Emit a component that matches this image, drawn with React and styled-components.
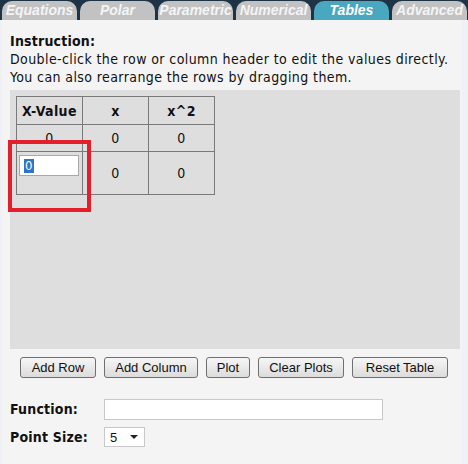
import React from "react";
import styled, { createGlobalStyle } from "styled-components";

const Global = createGlobalStyle`
  html, body {
    margin: 0;
    padding: 0;
    background: #eef2f6;
  }
  body {
    font-family: "DejaVu Sans Condensed", "DejaVu Sans", sans-serif;
  }
`;

const tabs = ["Equations", "Polar", "Parametric", "Numerical", "Tables", "Advanced"];

const buttons = [
  ["Add Row", 76],
  ["Add Column", 94],
  ["Plot", 44],
  ["Clear Plots", 86],
  ["Reset Table", 96],
];

const App = () => {
  return (
    <Page>
      <Global />
      <TabBar>
        {tabs.map((t) => (
          <Tab key={t} active={t === "Tables"}>
            {t}
          </Tab>
        ))}
      </TabBar>
      <Content>
        <Title>Instruction:</Title>
        <Text>Double-click the row or column header to edit the values directly.</Text>
        <Text>You can also rearrange the rows by dragging them.</Text>
        <Panel>
          <Table>
            <thead>
              <tr>
                <Th>X-Value</Th>
                <Th>x</Th>
                <Th>x^2</Th>
              </tr>
            </thead>
            <tbody>
              <tr>
                <Td>0</Td>
                <Td>0</Td>
                <Td>0</Td>
              </tr>
              <tr>
                <Td tall>
                  <CellInput defaultValue="" />
                  <Selected>0</Selected>
                </Td>
                <Td tall>0</Td>
                <Td tall>0</Td>
              </tr>
            </tbody>
          </Table>
          <Highlight />
        </Panel>
        <Buttons>
          {buttons.map(([label, w]) => (
            <Button key={label} w={w}>
              {label}
            </Button>
          ))}
        </Buttons>
        <Fields>
          <FieldRow>
            <Label>Function:</Label>
            <TextField />
          </FieldRow>
          <FieldRow>
            <Label>Point Size:</Label>
            <Select>
              <span>5</span>
              <Arrow />
            </Select>
          </FieldRow>
        </Fields>
      </Content>
    </Page>
  );
};

const Page = styled.div`
  width: 468px;
  height: 464px;
  overflow: hidden;
  display: flex;
  flex-direction: column;
`;

const TabBar = styled.div`
  display: flex;
  gap: 3px;
  height: 20px;
  padding: 1px 0 0 2px;
  box-sizing: border-box;
  background: #1d3447;
`;

const Tab = styled.div`
  width: 75px;
  flex: none;
  border-radius: 10px 10px 0 0;
  background: ${(p) => (p.active ? "#49a7bf" : "#c2c2c2")};
  color: ${(p) => (p.active ? "#ffffff" : "#f4f4f4")};
  font-family: "Liberation Sans", Arial, sans-serif;
  font-weight: bold;
  font-style: italic;
  font-size: 14px;
  line-height: 19px;
  text-align: center;
  white-space: nowrap;
`;

const Content = styled.div`
  flex: 1;
  margin: 0 6px 0 2px;
  padding: 12px 0 0 8px;
  background: #f4f4f4;
  color: #111;
  font-size: 14px;
  letter-spacing: 0.4px;
`;

const Title = styled.div`
  font-weight: bold;
  line-height: 18px;
  letter-spacing: 0.2px;
`;

const Text = styled.div`
  line-height: 18px;
  white-space: nowrap;
`;

const Panel = styled.div`
  position: relative;
  width: 450px;
  height: 259px;
  margin-top: 4px;
  padding: 6px;
  box-sizing: border-box;
  background: #dedede;
`;

const Table = styled.table`
  border-collapse: collapse;
  border: 1px solid #6e6e6e;
`;

const Th = styled.th`
  width: 65px;
  height: 27px;
  padding: 0;
  border: 1px solid #7a7a7a;
  font-weight: bold;
  font-size: 14px;
  text-align: center;
`;

const Td = styled.td`
  position: relative;
  height: ${(p) => (p.tall ? "43px" : "27px")};
  padding: 0;
  border: 1px solid #7a7a7a;
  font-size: 14px;
  text-align: center;
  vertical-align: middle;
  box-sizing: border-box;
`;

const CellInput = styled.input`
  position: absolute;
  left: 2px;
  top: 3px;
  width: 60px;
  height: 21px;
  box-sizing: border-box;
  border: 1px solid #a8a8a8;
  background: #fff;
`;

const Selected = styled.span`
  position: absolute;
  left: 7px;
  top: 7px;
  background: #3173c6;
  color: #fff;
  font-size: 13px;
  line-height: 14px;
  padding: 0 1px;
`;

const Highlight = styled.div`
  position: absolute;
  left: -2px;
  top: 50px;
  width: 75px;
  height: 64px;
  border: 4px solid #e41e2b;
`;

const Buttons = styled.div`
  display: flex;
  gap: 8px;
  padding: 8px 0 0 10px;
`;

const Button = styled.button`
  width: ${(p) => p.w}px;
  height: 21px;
  padding: 0;
  border: 1px solid #707070;
  border-radius: 3px;
  background: linear-gradient(#f6f6f6, #dcdcdc);
  font-family: "Liberation Sans", Arial, sans-serif;
  font-size: 13px;
  letter-spacing: 0;
  color: #111;
`;

const Fields = styled.div`
  display: flex;
  flex-direction: column;
  gap: 6px;
  margin-top: 20px;
`;

const FieldRow = styled.div`
  display: flex;
  align-items: center;
  height: 22px;
`;

const Label = styled.div`
  width: 94px;
  font-weight: bold;
  letter-spacing: 0.2px;
`;

const TextField = styled.div`
  width: 279px;
  height: 21px;
  box-sizing: border-box;
  border: 1px solid #c8c8c8;
  background: #fff;
`;

const Select = styled.div`
  width: 41px;
  height: 20px;
  box-sizing: border-box;
  border: 1px solid #c8c8c8;
  background: #fff;
  display: flex;
  align-items: center;
  justify-content: space-between;
  padding: 0 6px 0 5px;
  font-family: "Liberation Sans", Arial, sans-serif;
  font-size: 13px;
  letter-spacing: 0;
`;

const Arrow = styled.div`
  width: 0;
  height: 0;
  border-left: 4px solid transparent;
  border-right: 4px solid transparent;
  border-top: 4px solid #222;
`;

export default App;
